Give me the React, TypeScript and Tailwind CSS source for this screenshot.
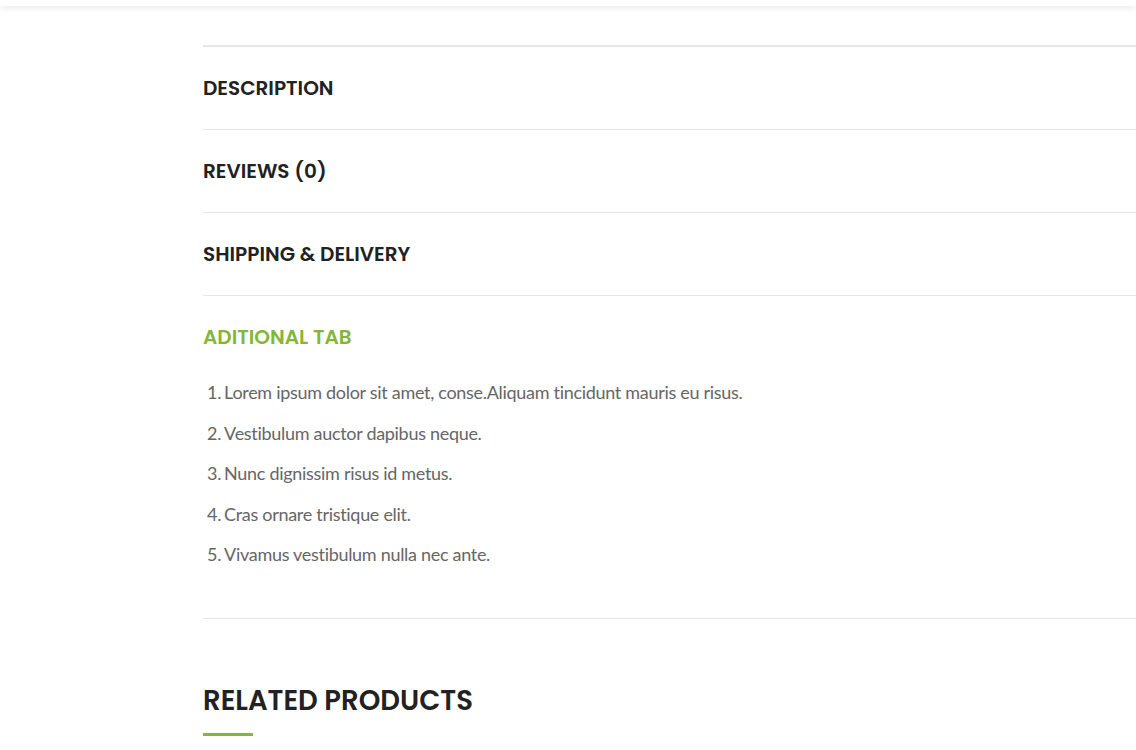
import React from "react";

const tabs = ["DESCRIPTION", "REVIEWS (0)", "SHIPPING & DELIVERY"];

const items = [
  "Lorem ipsum dolor sit amet, conse.Aliquam tincidunt mauris eu risus.",
  "Vestibulum auctor dapibus neque.",
  "Nunc dignissim risus id metus.",
  "Cras ornare tristique elit.",
  "Vivamus vestibulum nulla nec ante.",
];

const heading = "font-['Poppins','Inter','Open_Sans',sans-serif] font-semibold";

export default function App() {
  return (
    <div className="min-h-[750px] bg-white overflow-hidden">
      <div className="h-[6px] bg-white shadow-[0_2px_6px_rgba(0,0,0,0.09)]" />

      <div className="ml-[203px] mt-[39px] border-t-2 border-[#e6e6e6]">
        {tabs.map((t) => (
          <div key={t} className="h-[83px] flex items-center border-b border-[#e6e6e6]">
            <h3 className={`${heading} text-[20px] leading-[30px] text-[#222222]`}>{t}</h3>
          </div>
        ))}

        <div className="pt-[26px] pb-[43px] border-b border-[#e6e6e6]">
          <h3 className={`${heading} text-[20px] leading-[30px] text-[#83b735]`}>ADITIONAL TAB</h3>
          <ol className="mt-[20px] pl-[4px] font-['Lato',sans-serif] text-[18px] tracking-[-0.3px] leading-[40.5px] text-[#666666]">
            {items.map((it, i) => (
              <li key={i} className="flex gap-[3px]">
                <span>{i + 1}.</span>
                <span>{it}</span>
              </li>
            ))}
          </ol>
        </div>

        <div className="pt-[62px]">
          <h2 className={`${heading} text-[27.5px] leading-[40px] text-[#222222]`}>RELATED PRODUCTS</h2>
          <div className="mt-[12px] w-[50px] h-[3px] bg-[#83b735]" />
        </div>
      </div>
    </div>
  );
}
